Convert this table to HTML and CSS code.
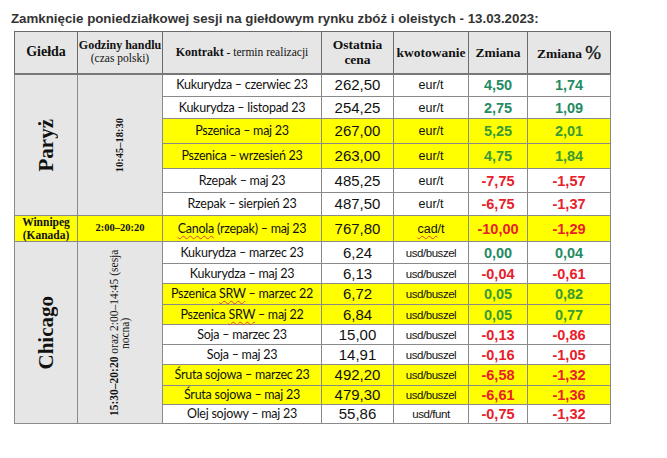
FILE: index.html
```html
<!DOCTYPE html>
<html lang="pl">
<head>
<meta charset="utf-8">
<title>Notowania</title>
<link rel="stylesheet" href="styles.css">
</head>
<body>
<div class="page">
  <h1 class="title">Zamknięcie poniedziałkowej sesji na giełdowym rynku zbóż i oleistych - 13.03.2023:</h1>
  <table class="quotes">
    <colgroup>
      <col class="c-ex"><col class="c-hours"><col class="c-contract"><col class="c-price"><col class="c-unit"><col class="c-chg"><col class="c-pct">
    </colgroup>
    <thead>
      <tr class="head">
        <th class="h-ex">Giełda</th>
        <th class="h-small"><b>Godziny handlu</b><br><span class="normal">(czas polski)</span></th>
        <th class="h-small"><b>Kontrakt</b><span class="normal"> - termin realizacji</span></th>
        <th class="h-med">Ostatnia<br>cena</th>
        <th class="h-med">kwotowanie</th>
        <th class="h-med">Zmiana</th>
        <th class="h-med">Zmiana <span class="pct">%</span></th>
      </tr>
    </thead>
    <tbody>
      <tr class="h23">
        <td class="ex" rowspan="6"><div class="vert big">Paryż</div></td>
        <td class="ex" rowspan="6"><div class="vert hours">10:45–18:30</div></td>
        <td class="contract">Kukurydza – czerwiec 23</td>
        <td class="price">262,50</td>
        <td class="unit">eur/t</td>
        <td class="chg up">4,50</td>
        <td class="chg up">1,74</td>
      </tr>
      <tr class="h22">
        <td class="contract">Kukurydza – listopad 23</td>
        <td class="price">254,25</td>
        <td class="unit">eur/t</td>
        <td class="chg up">2,75</td>
        <td class="chg up">1,09</td>
      </tr>
      <tr class="h25 hl">
        <td class="contract">Pszenica – maj 23</td>
        <td class="price">267,00</td>
        <td class="unit">eur/t</td>
        <td class="chg up2">5,25</td>
        <td class="chg up2">2,01</td>
      </tr>
      <tr class="h25 hl">
        <td class="contract">Pszenica – wrzesień 23</td>
        <td class="price">263,00</td>
        <td class="unit">eur/t</td>
        <td class="chg up2">4,75</td>
        <td class="chg up2">1,84</td>
      </tr>
      <tr class="h24">
        <td class="contract">Rzepak – maj 23</td>
        <td class="price">485,25</td>
        <td class="unit">eur/t</td>
        <td class="chg down">-7,75</td>
        <td class="chg down">-1,57</td>
      </tr>
      <tr class="h23">
        <td class="contract">Rzepak – sierpień 23</td>
        <td class="price">487,50</td>
        <td class="unit">eur/t</td>
        <td class="chg down">-6,75</td>
        <td class="chg down">-1,37</td>
      </tr>
      <tr class="h26 hl">
        <td class="win win-name">Winnipeg<br>(Kanada)</td>
        <td class="win win-time">2:00–20:20</td>
        <td class="contract"><span class="spell">Canola</span> (rzepak) – maj 23</td>
        <td class="price">767,80</td>
        <td class="unit"><span class="spell">cad</span>/t</td>
        <td class="chg down">-10,00</td>
        <td class="chg down">-1,29</td>
      </tr>
      <tr class="h22">
        <td class="ex" rowspan="9"><div class="vert big">Chicago</div></td>
        <td class="ex" rowspan="9"><div class="vert hours2"><b>15:30–20:20</b> oraz 2:00–14:45 (sesja nocna)</div></td>
        <td class="contract">Kukurydza – marzec 23</td>
        <td class="price">6,24</td>
        <td class="unit narrow">usd/buszel</td>
        <td class="chg up">0,00</td>
        <td class="chg up">0,04</td>
      </tr>
      <tr class="h20">
        <td class="contract">Kukurydza – maj 23</td>
        <td class="price">6,13</td>
        <td class="unit narrow">usd/buszel</td>
        <td class="chg down">-0,04</td>
        <td class="chg down">-0,61</td>
      </tr>
      <tr class="h21 hl">
        <td class="contract">Pszenica <span class="spell">SRW</span> – marzec 22</td>
        <td class="price">6,72</td>
        <td class="unit narrow">usd/buszel</td>
        <td class="chg up2">0,05</td>
        <td class="chg up2">0,82</td>
      </tr>
      <tr class="h20 hl">
        <td class="contract">Pszenica <span class="spell">SRW</span> – maj 22</td>
        <td class="price">6,84</td>
        <td class="unit narrow">usd/buszel</td>
        <td class="chg up2">0,05</td>
        <td class="chg up2">0,77</td>
      </tr>
      <tr class="h20">
        <td class="contract">Soja – marzec 23</td>
        <td class="price">15,00</td>
        <td class="unit narrow">usd/buszel</td>
        <td class="chg down">-0,13</td>
        <td class="chg down">-0,86</td>
      </tr>
      <tr class="h20">
        <td class="contract">Soja – maj 23</td>
        <td class="price">14,91</td>
        <td class="unit narrow">usd/buszel</td>
        <td class="chg down">-0,16</td>
        <td class="chg down">-1,05</td>
      </tr>
      <tr class="h21 hl">
        <td class="contract">Śruta sojowa – marzec 23</td>
        <td class="price">492,20</td>
        <td class="unit narrow">usd/buszel</td>
        <td class="chg down">-6,58</td>
        <td class="chg down">-1,32</td>
      </tr>
      <tr class="h19 hl">
        <td class="contract">Śruta sojowa – maj 23</td>
        <td class="price">479,30</td>
        <td class="unit narrow">usd/buszel</td>
        <td class="chg down">-6,61</td>
        <td class="chg down">-1,36</td>
      </tr>
      <tr class="h19">
        <td class="contract">Olej sojowy – maj 23</td>
        <td class="price">55,86</td>
        <td class="unit narrow">usd/funt</td>
        <td class="chg down">-0,75</td>
        <td class="chg down">-1,32</td>
      </tr>
    </tbody>
  </table>
</div>
</body>
</html>
```

FILE: styles.css
```css
* { box-sizing: border-box; }
html, body { margin: 0; padding: 0; background: #fff; }
body { font-family: "Liberation Sans", Arial, sans-serif; color: #111; }

.page { padding: 12px 0 0 11px; }

.title {
  margin: 0 0 6px 0;
  font-size: 13.3px;
  line-height: 13px;
  font-weight: bold;
  color: #333;
}

.quotes {
  margin-left: 3px;
  width: 596px;
  table-layout: fixed;
  border-collapse: collapse;
  border: 1px solid #666;
}
.c-ex { width: 63px; }
.c-hours { width: 85px; }
.c-contract { width: 159px; }
.c-price { width: 72px; }
.c-unit { width: 75px; }
.c-chg { width: 59px; }
.c-pct { width: 83px; }

.quotes th, .quotes td {
  border: 1px solid #8a8a8a;
  padding: 0;
  text-align: center;
  vertical-align: middle;
}
.quotes td { line-height: 16px; }

.head { height: 42px; background: #e6e6e6; }
.head th {
  font-family: "Liberation Serif", "Times New Roman", serif;
  font-weight: bold;
  color: #111;
  border-color: #6a6a6a;
  border-bottom: 2px solid #777;
}
.h-ex { font-size: 14px; }
.h-small { font-size: 11.5px; line-height: 13px; }
.h-small b { font-size: 12px; }
.normal { font-weight: normal; }
.h-med { font-size: 13.5px; line-height: 15px; }
.pct { font-size: 19px; font-weight: normal; position: relative; top: 1px; -webkit-text-stroke: 0.4px #111; }

.h19 { height: 19px; }
.h20 { height: 20px; }
.h21 { height: 21px; }
.h22 { height: 22px; }
.h23 { height: 23px; }
.h24 { height: 24px; }
.h25 { height: 25px; }
.h26 { height: 26px; }

.hl td { background: #ffff00; }

.quotes td.ex { background: #e6e6e6; }

.vert {
  writing-mode: vertical-rl;
  transform: rotate(180deg);
  display: inline-block;
  font-family: "Liberation Serif", "Times New Roman", serif;
  color: #111;
  vertical-align: middle;
}
.big { font-size: 21px; font-weight: bold; line-height: 24px; }
.hours { font-size: 10.5px; font-weight: bold; line-height: 12px; }
.hours2 {
  font-size: 11.5px;
  line-height: 11px;
  height: 172px;
  text-align: center;
}

.quotes td.win {
  font-family: "Liberation Serif", "Times New Roman", serif;
  font-weight: bold;
  color: #111;
  line-height: 12.5px;
}
.quotes td.win-name { font-size: 11.5px; }
.quotes td.win-time { font-size: 10.5px; }

.contract {
  font-family: Lato, "Open Sans", sans-serif;
  font-size: 12.5px;
  letter-spacing: -0.25px;
  color: #111;
}
.price { font-size: 15px; color: #111; }
.unit { font-size: 12.5px; color: #111; }
.unit.narrow { font-size: 11.5px; letter-spacing: -0.45px; }
.chg { font-size: 14.5px; font-weight: bold; }
.up { color: #238a62; }
.up2 { color: #3b9a34; }
.down { color: #e8202a; }

.spell {
  text-decoration: underline wavy #e04040;
  text-decoration-thickness: 1px;
  text-underline-offset: 2px;
}
```
